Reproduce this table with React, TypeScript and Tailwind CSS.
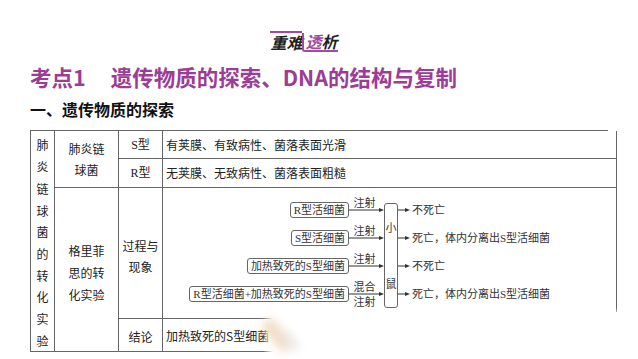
import React from "react";

const sans = "font-['Noto_Sans_CJK_SC','Noto_Sans',sans-serif]";
const serif = "font-['Liberation_Serif','Noto_Sans_CJK_SC',serif]";

function Arrow({ w }: { w: number }) {
  return (
    <svg width={w} height="6" viewBox={`0 0 ${w} 6`} className="block">
      <line x1="0" y1="3" x2={w - 3} y2="3" stroke="#333" strokeWidth="1" />
      <polygon points={`${w - 5},1 ${w},3 ${w - 5},5`} fill="#333" />
    </svg>
  );
}

function Box({ children }: { children: React.ReactNode }) {
  return (
    <div className="h-[16px] flex items-center px-[3px] border border-[#666] rounded-[3px] text-[11px] leading-none text-[#333] whitespace-nowrap">
      {children}
    </div>
  );
}

const rows = [
  { box: "R型活细菌", top: "注射", bottom: "", result: "不死亡" },
  { box: "S型活细菌", top: "注射", bottom: "", result: "死亡，体内分离出S型活细菌" },
  { box: "加热致死的S型细菌", top: "注射", bottom: "", result: "不死亡" },
  { box: "R型活细菌+加热致死的S型细菌", top: "混合", bottom: "注射", result: "死亡，体内分离出S型活细菌" },
];

function Diagram() {
  return (
    <div className={`flex items-start h-full ${serif} text-[#333]`}>
      <div className="flex flex-col pt-[8px]">
        {rows.map((r) => (
          <div key={r.box} className="h-[28px] flex items-center">
            <div className="w-[186px] flex justify-end">
              <Box>{r.box}</Box>
            </div>
            <div className="w-[35px] h-full flex flex-col">
              <div className="h-[14px] flex items-end justify-center pr-[4px] pb-[1px] text-[11px] leading-[11px]">
                {r.top}
              </div>
              <div className="-my-[3px]">
                <Arrow w={35} />
              </div>
              <div className="h-[14px] flex items-start justify-center pr-[4px] pt-[3px] text-[11px] leading-[11px]">
                {r.bottom}
              </div>
            </div>
          </div>
        ))}
      </div>
      <div className="mt-[15px] h-[105px] w-[14px] border border-[#666] rounded-[3px] flex flex-col items-center pt-[18px] text-[11px] leading-[12px]">
        <span>小</span>
        <span className="mt-[44px]">鼠</span>
      </div>
      <div className="flex flex-col pt-[8px]">
        {rows.map((r, i) => (
          <div key={i} className="h-[28px] flex items-center gap-[2px]">
            <Arrow w={12} />
            <span className="text-[11px] leading-none whitespace-nowrap">{r.result}</span>
          </div>
        ))}
      </div>
    </div>
  );
}

export default function App() {
  const cell = "border-r border-b border-[#666]";
  return (
    <div className={`relative w-[638px] h-[359px] bg-white overflow-hidden ${sans}`}>
      <div className="flex flex-col px-[30px]">
        {/* 重难透析 */}
        <div className="flex justify-center pt-[31px] pr-[30px]">
          <div className="flex italic font-bold text-[16px] leading-[17px] text-[#222]">
            <span className="border-t-2 border-[#a24aa0] pt-[1px]">重难</span>
            <span className="flex border-b-2 border-l-2 border-[#a24aa0] rounded-bl-[3px] mt-[2px] pl-[1px]">
              <span className="text-[#a24aa0]">透</span>
              <span>析</span>
            </span>
          </div>
        </div>

        <h1 className="mt-[12px] flex text-[21.5px] leading-[26px] font-bold text-[#9b3c96]">
          <span>考点1</span>
          <span className="ml-[25px]">遗传物质的探索、DNA的结构与复制</span>
        </h1>

        <h2 className="mt-[9px] text-[16px] leading-[20px] font-bold text-[#111]">一、遗传物质的探索</h2>

        {/* table */}
        <div className="mt-[11px] grid grid-cols-[24px_64px_44px_454px] grid-rows-[28px_29px_131px_33px] border-t border-l border-[#666] text-[12px] text-[#222]">
          <div className={`${cell} row-span-4 flex flex-col items-center justify-center pt-[4px] leading-[21.7px]`}>
            {"肺炎链球菌的转化实验".split("").map((c, i) => (
              <span key={i}>{c}</span>
            ))}
          </div>
          <div className={`${cell} row-span-2 flex flex-col items-center justify-center leading-[21px]`}>
            <span>肺炎链</span>
            <span>球菌</span>
          </div>
          <div className={`${cell} flex items-center justify-center ${serif} text-[12px]`}>S型</div>
          <div className={`${cell} flex items-center pl-[3px]`}>有荚膜、有致病性、菌落表面光滑</div>
          <div className={`${cell} flex items-center justify-center ${serif} text-[12px]`}>R型</div>
          <div className={`${cell} flex items-center pl-[3px]`}>无荚膜、无致病性、菌落表面粗糙</div>

          <div className={`${cell} row-span-2 flex flex-col items-center justify-center pt-[6px] leading-[22px]`}>
            <span>格里菲</span>
            <span>思的转</span>
            <span>化实验</span>
          </div>
          <div className={`${cell} flex flex-col items-center justify-center pt-[6px] leading-[21px]`}>
            <span>过程与</span>
            <span>现象</span>
          </div>
          <div className={`${cell}`}>
            <Diagram />
          </div>
          <div className={`${cell} flex items-center justify-center pt-[4px]`}>结论</div>
          <div className={`${cell} flex items-center pl-[3px] pt-[2px]`}>加热致死的S型细菌</div>
        </div>
      </div>

      {/* faded corner overlay */}
      <div className="absolute left-[263px] top-[312px] w-[10px] bottom-0 bg-gradient-to-r from-white/0 to-white" />
      <div className="absolute left-[273px] top-[312px] right-0 bottom-0 bg-white" />
      <div className="absolute left-[600px] top-[308px] w-[30px] h-[8px] bg-gradient-to-b from-white/0 to-white" />
      <div className="absolute left-[270px] top-[318px] w-[14px] h-[34px] rotate-[-40deg] bg-[#eed3b2] blur-[5px] opacity-80" />
      <div className="absolute left-[285px] top-[330px] w-[10px] h-[22px] rotate-[-40deg] bg-[#e8e8e8] blur-[4px] opacity-70" />
    </div>
  );
}
